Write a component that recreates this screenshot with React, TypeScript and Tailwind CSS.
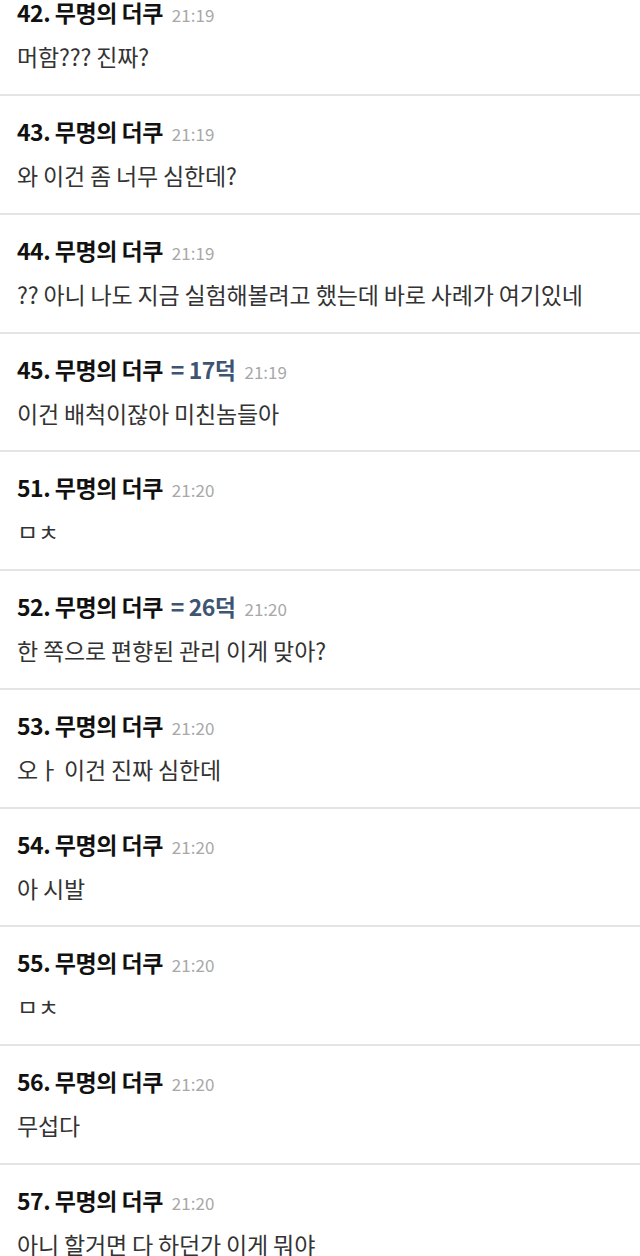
import React from "react";

type Row = { n: number; time: string; body: string; deok?: string };

const rows: Row[] = [
  { n: 42, time: "21:19", body: "머함??? 진짜?" },
  { n: 43, time: "21:19", body: "와 이건 좀 너무 심한데?" },
  { n: 44, time: "21:19", body: "?? 아니 나도 지금 실험해볼려고 했는데 바로 사례가 여기있네" },
  { n: 45, time: "21:19", body: "이건 배척이잖아 미친놈들아", deok: "= 17덕" },
  { n: 51, time: "21:20", body: "ㅁㅊ" },
  { n: 52, time: "21:20", body: "한 쪽으로 편향된 관리 이게 맞아?", deok: "= 26덕" },
  { n: 53, time: "21:20", body: "오ㅏ 이건 진짜 심한데" },
  { n: 54, time: "21:20", body: "아 시발" },
  { n: 55, time: "21:20", body: "ㅁㅊ" },
  { n: 56, time: "21:20", body: "무섭다" },
  { n: 57, time: "21:20", body: "아니 할거면 다 하던가 이게 뭐야" },
];

export default function App() {
  return (
    <div
      className="w-[640px] h-[1256px] overflow-hidden bg-white"
      style={{ fontFamily: '"Noto Sans CJK KR", "Noto Sans", sans-serif' }}
    >
      <div className="mt-[-22.75px]">
        {rows.map((r) => (
          <div
            key={r.n}
            className="h-[118.75px] border-b-2 border-[#e4e4e4] pl-[17px] pt-[20px]"
          >
            <div className="flex items-baseline h-[30px] leading-[30px] whitespace-nowrap">
              <span className="text-[23px] font-bold text-[#111111] tracking-[-0.5px]">
                {r.n}. 무명의 더쿠
              </span>
              {r.deok && (
                <span className="ml-[8px] text-[23px] font-bold text-[#3d5573] tracking-[-0.5px]">
                  {r.deok}
                </span>
              )}
              <span className="ml-[9px] text-[17px] text-[#a8a8a8]">{r.time}</span>
            </div>
            <div className="mt-[14px] h-[30px] leading-[30px] text-[23px] text-[#333333] tracking-[-0.15px] whitespace-nowrap">
              {r.body}
            </div>
          </div>
        ))}
      </div>
    </div>
  );
}
